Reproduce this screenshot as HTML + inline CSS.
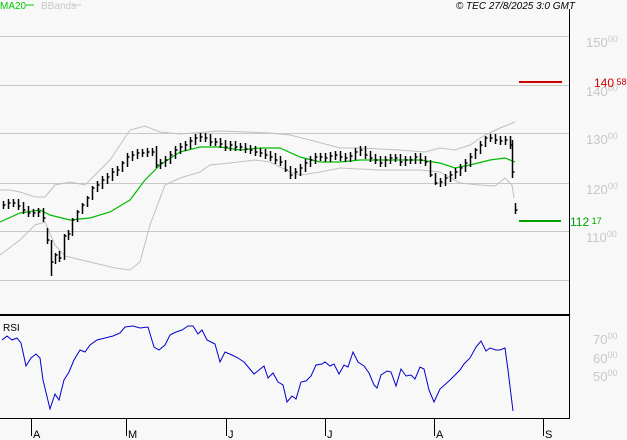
<!DOCTYPE html>
<html><head><meta charset="utf-8"><style>
html,body{margin:0;padding:0;background:#f8f8f8;width:627px;height:440px;overflow:hidden}
svg{display:block}
text{font-family:"Liberation Sans",sans-serif}
</style></head><body>
<svg id="s" width="627" height="440" xmlns="http://www.w3.org/2000/svg">
<rect width="627" height="440" fill="#f8f8f8"/>
<g stroke="#c8c8c8" stroke-width="1">
<line x1="0" y1="36.5" x2="569" y2="36.5"/><line x1="0" y1="85.5" x2="569" y2="85.5"/>
<line x1="0" y1="133.5" x2="569" y2="133.5"/><line x1="0" y1="183.5" x2="569" y2="183.5"/>
<line x1="0" y1="231.5" x2="569" y2="231.5"/><line x1="0" y1="280.5" x2="569" y2="280.5"/>
</g>
<g fill="#c8c8c8" font-size="13">
<text x="586" y="47">150<tspan font-size="9" dy="-5">00</tspan></text>
<text x="586" y="96">140<tspan font-size="9" dy="-5">00</tspan></text>
<text x="586" y="144">130<tspan font-size="9" dy="-5">00</tspan></text>
<text x="586" y="194">120<tspan font-size="9" dy="-5">00</tspan></text>
<text x="586" y="242">110<tspan font-size="9" dy="-5">00</tspan></text>
<text x="593" y="344">70<tspan font-size="9" dy="-5">00</tspan></text>
<text x="593" y="363">60<tspan font-size="9" dy="-5">00</tspan></text>
<text x="593" y="381">50<tspan font-size="9" dy="-5">00</tspan></text>
</g>
<polyline fill="none" stroke="#c0c0c0" stroke-width="1" points="0,190 10,190 20,192 35,197 45,197 55,185 70,182 85,185 110,160 130,130 145,126 160,132 180,134 220,131 270,133 290,135 310,140 340,148 360,148 400,150 425,152 440,148 455,150 470,145 485,135 500,128 515,122"/>
<polyline fill="none" stroke="#c0c0c0" stroke-width="1" points="0,255 20,240 35,225 45,222 55,245 65,256 90,262 115,268 130,270 140,262 150,225 165,185 180,178 200,172 210,165 230,163 255,160 270,162 290,172 300,175 320,172 340,168 360,169 380,170 420,170 440,172 460,183 480,185 495,186 505,178 512,185 514,198"/>
<polyline fill="none" stroke="#00bb00" stroke-width="1.2" points="0,222 20,213 40,210 50,215 70,220 90,218 110,212 130,200 145,180 160,165 180,152 200,147 220,147 240,150 260,148 280,148 300,157 320,162 340,162 360,160 380,160 400,160 420,160 440,163 455,168 470,165 490,160 505,158 515,162"/>
<path id="bars" fill="none" stroke="#000" stroke-width="1.5" d=""/>
<line x1="519" y1="82" x2="562" y2="82" stroke="#cc0000" stroke-width="2"/>
<line x1="519" y1="221" x2="561" y2="221" stroke="#00a000" stroke-width="2"/>
<text x="594" y="87" fill="#cc0000" font-size="12">140<tspan font-size="9" dy="-2"> 58</tspan></text>
<text x="570" y="226" fill="#00a000" font-size="12">112<tspan font-size="9" dy="-2"> 17</tspan></text>
<line x1="569.5" y1="9" x2="569.5" y2="419" stroke="#000"/>
<line x1="0" y1="315" x2="570" y2="315" stroke="#000" stroke-width="2"/>
<line x1="0" y1="418.5" x2="570" y2="418.5" stroke="#000"/>
<text x="3" y="331" font-size="10" fill="#000">RSI</text>
<polyline fill="none" stroke="#0000cc" stroke-width="1" points="2,340 7,336 12,340 17,338 21,343 26,366 31,358 36,354 40,358 43,380 50,409 55,394 59,400 64,380 69,372 74,360 80,350 85,352 90,345 97,340 105,338 113,336 120,333 125,327 133,326 140,328 148,327 154,347 159,350 165,345 170,335 176,332 182,330 188,326 193,326 198,334 202,330 207,340 215,344 220,362 225,352 232,355 238,358 244,362 249,368 254,374 259,370 264,366 268,378 273,373 278,382 283,385 287,402 292,396 296,399 301,382 306,381 311,376 316,365 322,364 325,362 330,366 334,364 339,374 344,365 348,367 353,352 358,362 364,366 369,373 374,385 377,388 381,375 387,371 391,372 396,386 401,369 406,376 411,375 415,379 420,367 424,369 429,390 434,402 440,389 450,380 460,370 464,364 470,358 476,347 481,341 486,351 490,348 496,350 500,350 505,348 508,370 513,411"/>
<g stroke="#000"><line x1="31.5" y1="419" x2="31.5" y2="436"/><line x1="126.5" y1="419" x2="126.5" y2="436"/><line x1="226.5" y1="419" x2="226.5" y2="436"/><line x1="325.5" y1="419" x2="325.5" y2="436"/><line x1="434.5" y1="419" x2="434.5" y2="436"/><line x1="543.5" y1="419" x2="543.5" y2="436"/></g>
<g font-size="11" fill="#000"><text x="33" y="438">A</text><text x="128" y="438">M</text><text x="228" y="438">J</text><text x="327" y="438">J</text><text x="436" y="438">A</text><text x="545" y="438">S</text></g>
<text x="0" y="9" font-size="10" fill="#00cc00">MA20</text><line x1="26" y1="5" x2="34" y2="5" stroke="#00cc00"/>
<text x="41" y="9" font-size="10" fill="#c8c8c8">BBands</text><line x1="73" y1="5" x2="81" y2="5" stroke="#c8c8c8"/>
<text x="575" y="9" font-size="10" font-style="italic" fill="#000" text-anchor="end">© TEC 27/8/2025 3:0 GMT</text>
</svg>
<script>
var c=[[3,205],[8,203],[13,203],[18,206],[23,210],[28,213],[33,213],[38,212],[43,218],[47,240],[51,262],[55,255],[59,258],[64,236],[68,234],[72,220],[77,212],[82,205],[87,198],[92,188],[97,185],[102,180],[107,177],[112,172],[117,170],[122,163],[127,157],[132,155],[137,153],[142,153],[147,152],[152,152],[156,165],[160,163],[165,160],[170,155],[175,150],[180,147],[185,145],[190,141],[195,138],[200,137],[205,138],[210,142],[215,142],[220,144],[225,147],[230,145],[235,147],[240,147],[245,149],[250,150],[255,152],[260,153],[265,155],[270,157],[275,160],[280,162],[285,170],[290,175],[295,172],[300,168],[305,163],[310,160],[315,157],[320,157],[325,158],[330,156],[335,155],[340,157],[345,158],[350,156],[355,152],[360,150],[365,155],[370,158],[375,160],[380,163],[385,160],[390,158],[395,158],[400,162],[405,160],[410,160],[415,157],[420,160],[425,162],[430,175],[435,183],[440,182],[445,178],[450,175],[455,172],[460,168],[465,163],[470,157],[475,150],[480,145],[485,138],[490,138],[495,140],[500,141],[505,140],[510,145],[512,172],[515,210]];
var d="",p=c[0][1];
for(var i=0;i<c.length;i++){var x=c[i][0]+0.5,y=c[i][1];var t=Math.min(y,p)-4,b=Math.max(y,p)+4;
if(b-t>14){t=Math.min(y,p)-2;b=Math.max(y,p)+2;}
if(c[i][0]==47){t=228;b=244}if(c[i][0]==51){t=240;b=276}if(c[i][0]==156){t=146;b=168}
if(c[i][0]==512){t=140;b=178}if(c[i][0]==515){t=203;b=214}
d+="M"+x+","+t+"V"+b+"M"+x+","+y+"h2";p=y;}
document.getElementById("bars").setAttribute("d",d);
</script>
</body></html>
